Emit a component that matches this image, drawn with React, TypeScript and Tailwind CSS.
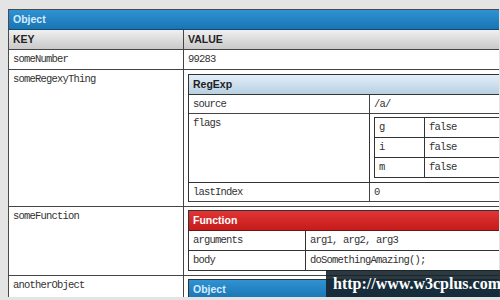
const mono = "font-['Liberation_Mono',monospace] text-[10.5px] tracking-[-0.8px] text-[#333]";
const head = "font-['Liberation_Sans',Arial,sans-serif] text-[10.5px] font-bold";

function Row({ k, keyW, h, children, last }: { k: string; keyW: string; h?: string; children: React.ReactNode; last?: boolean }) {
  return (
    <div className={`grid ${keyW} ${last ? "" : "border-b border-[#444]"} ${h ?? ""}`}>
      <div className={`border-r border-[#444] px-[4px] leading-[18px] ${mono}`}>{k}</div>
      <div className={`px-[4px] leading-[18px] ${mono}`}>{children}</div>
    </div>
  );
}

function OuterRow({ k, children, pad }: { k: string; children: React.ReactNode; pad?: string }) {
  return (
    <div className="grid grid-cols-[175px_1fr] border-b border-[#444]">
      <div className={`border-r border-[#444] px-[4px] leading-[19px] ${mono}`}>{k}</div>
      <div className={pad ?? `h-[19px] px-[4px] leading-[19px] ${mono}`}>{children}</div>
    </div>
  );
}

function Flags() {
  const rows = ["g", "i", "m"];
  return (
    <div className="border-l border-t border-[#333] bg-white">
      {rows.map((r) => (
        <div key={r} className="grid h-[20px] grid-cols-[50px_1fr] border-b border-[#333]">
          <div className={`border-r border-[#333] px-[4px] leading-[19px] ${mono}`}>{r}</div>
          <div className={`px-[4px] leading-[19px] ${mono}`}>false</div>
        </div>
      ))}
    </div>
  );
}

function RegExpTable() {
  return (
    <div className="border-l border-t border-[#333] bg-white">
      <div className={`h-[20px] border-b border-[#333] bg-linear-to-b from-[#e4eff7] to-[#b7d0e3] px-[4px] leading-[19px] text-[#222] ${head}`}>
        RegExp
      </div>
      <Row k="source" keyW="grid-cols-[181px_1fr]" h="h-[19px]">/a/</Row>
      <div className="grid h-[69px] grid-cols-[181px_1fr] border-b border-[#333]">
        <div className={`border-r border-[#333] px-[4px] leading-[18px] ${mono}`}>flags</div>
        <div className="pl-[4px] pt-[3px]">
          <Flags />
        </div>
      </div>
      <Row k="lastIndex" keyW="grid-cols-[181px_1fr]" h="h-[19px]">0</Row>
    </div>
  );
}

function FunctionTable() {
  return (
    <div className="border-l border-t border-[#333] bg-white">
      <div className={`h-[20px] border-b border-[#7a0f0f] bg-linear-to-b from-[#e23434] to-[#c41b1b] px-[4px] leading-[19px] text-white ${head}`}>
        Function
      </div>
      <div className="grid h-[20px] grid-cols-[117px_1fr] border-b border-[#333]">
        <div className={`border-r border-[#333] px-[4px] leading-[19px] ${mono}`}>arguments</div>
        <div className={`px-[4px] leading-[19px] ${mono}`}>arg1, arg2, arg3</div>
      </div>
      <div className="grid h-[20px] grid-cols-[117px_1fr] border-b border-[#333]">
        <div className={`border-r border-[#333] px-[4px] leading-[19px] ${mono}`}>body</div>
        <div className={`px-[4px] leading-[19px] ${mono}`}>doSomethingAmazing();</div>
      </div>
    </div>
  );
}

export default function App() {
  return (
    <div className="relative h-[300px] w-[500px] overflow-hidden bg-[#e4e4e4] pl-[8px] pt-[9px]">
      <div className="h-[288px] w-[491px] overflow-hidden">
        <div className="w-[560px] border-l border-t border-[#4a4a4a] bg-white">
          <div className={`h-[20px] border-b border-[#0f4a70] bg-linear-to-b from-[#2f93d3] to-[#1a74b2] px-[4px] leading-[19px] text-[#d6ecff] ${head}`}>
            Object
          </div>
          <div className="grid h-[20px] grid-cols-[175px_1fr] border-b border-[#444] bg-linear-to-b from-[#f0f0f0] to-[#c9c9c9]">
            <div className={`border-r border-[#444] px-[4px] leading-[19px] text-[#222] ${head}`}>KEY</div>
            <div className={`px-[4px] leading-[19px] text-[#222] ${head}`}>VALUE</div>
          </div>
          <OuterRow k="someNumber">99283</OuterRow>
          <OuterRow k="someRegexyThing" pad="px-[4px] pt-[4px] pb-[4px]">
            <RegExpTable />
          </OuterRow>
          <OuterRow k="someFunction" pad="px-[4px] pt-[3px] pb-[4px]">
            <FunctionTable />
          </OuterRow>
          <OuterRow k="anotherObject" pad="px-[4px] pt-[3px] pb-[4px]">
            <div className="border-l border-t border-[#333] bg-white">
              <div className={`h-[20px] border-b border-[#0f4a70] bg-linear-to-b from-[#2f93d3] to-[#1a74b2] px-[4px] leading-[19px] text-[#d6ecff] ${head}`}>
                Object
              </div>
              <div className="h-[40px]" />
            </div>
          </OuterRow>
        </div>
      </div>
      <div className="absolute left-[326px] top-[270px] flex h-[27px] w-[174px] items-center bg-[#16232c]/90 pl-[7px]">
        <span className="font-['Liberation_Serif',serif] text-[16px] font-bold text-white">http://www.w3cplus.com</span>
      </div>
    </div>
  );
}
